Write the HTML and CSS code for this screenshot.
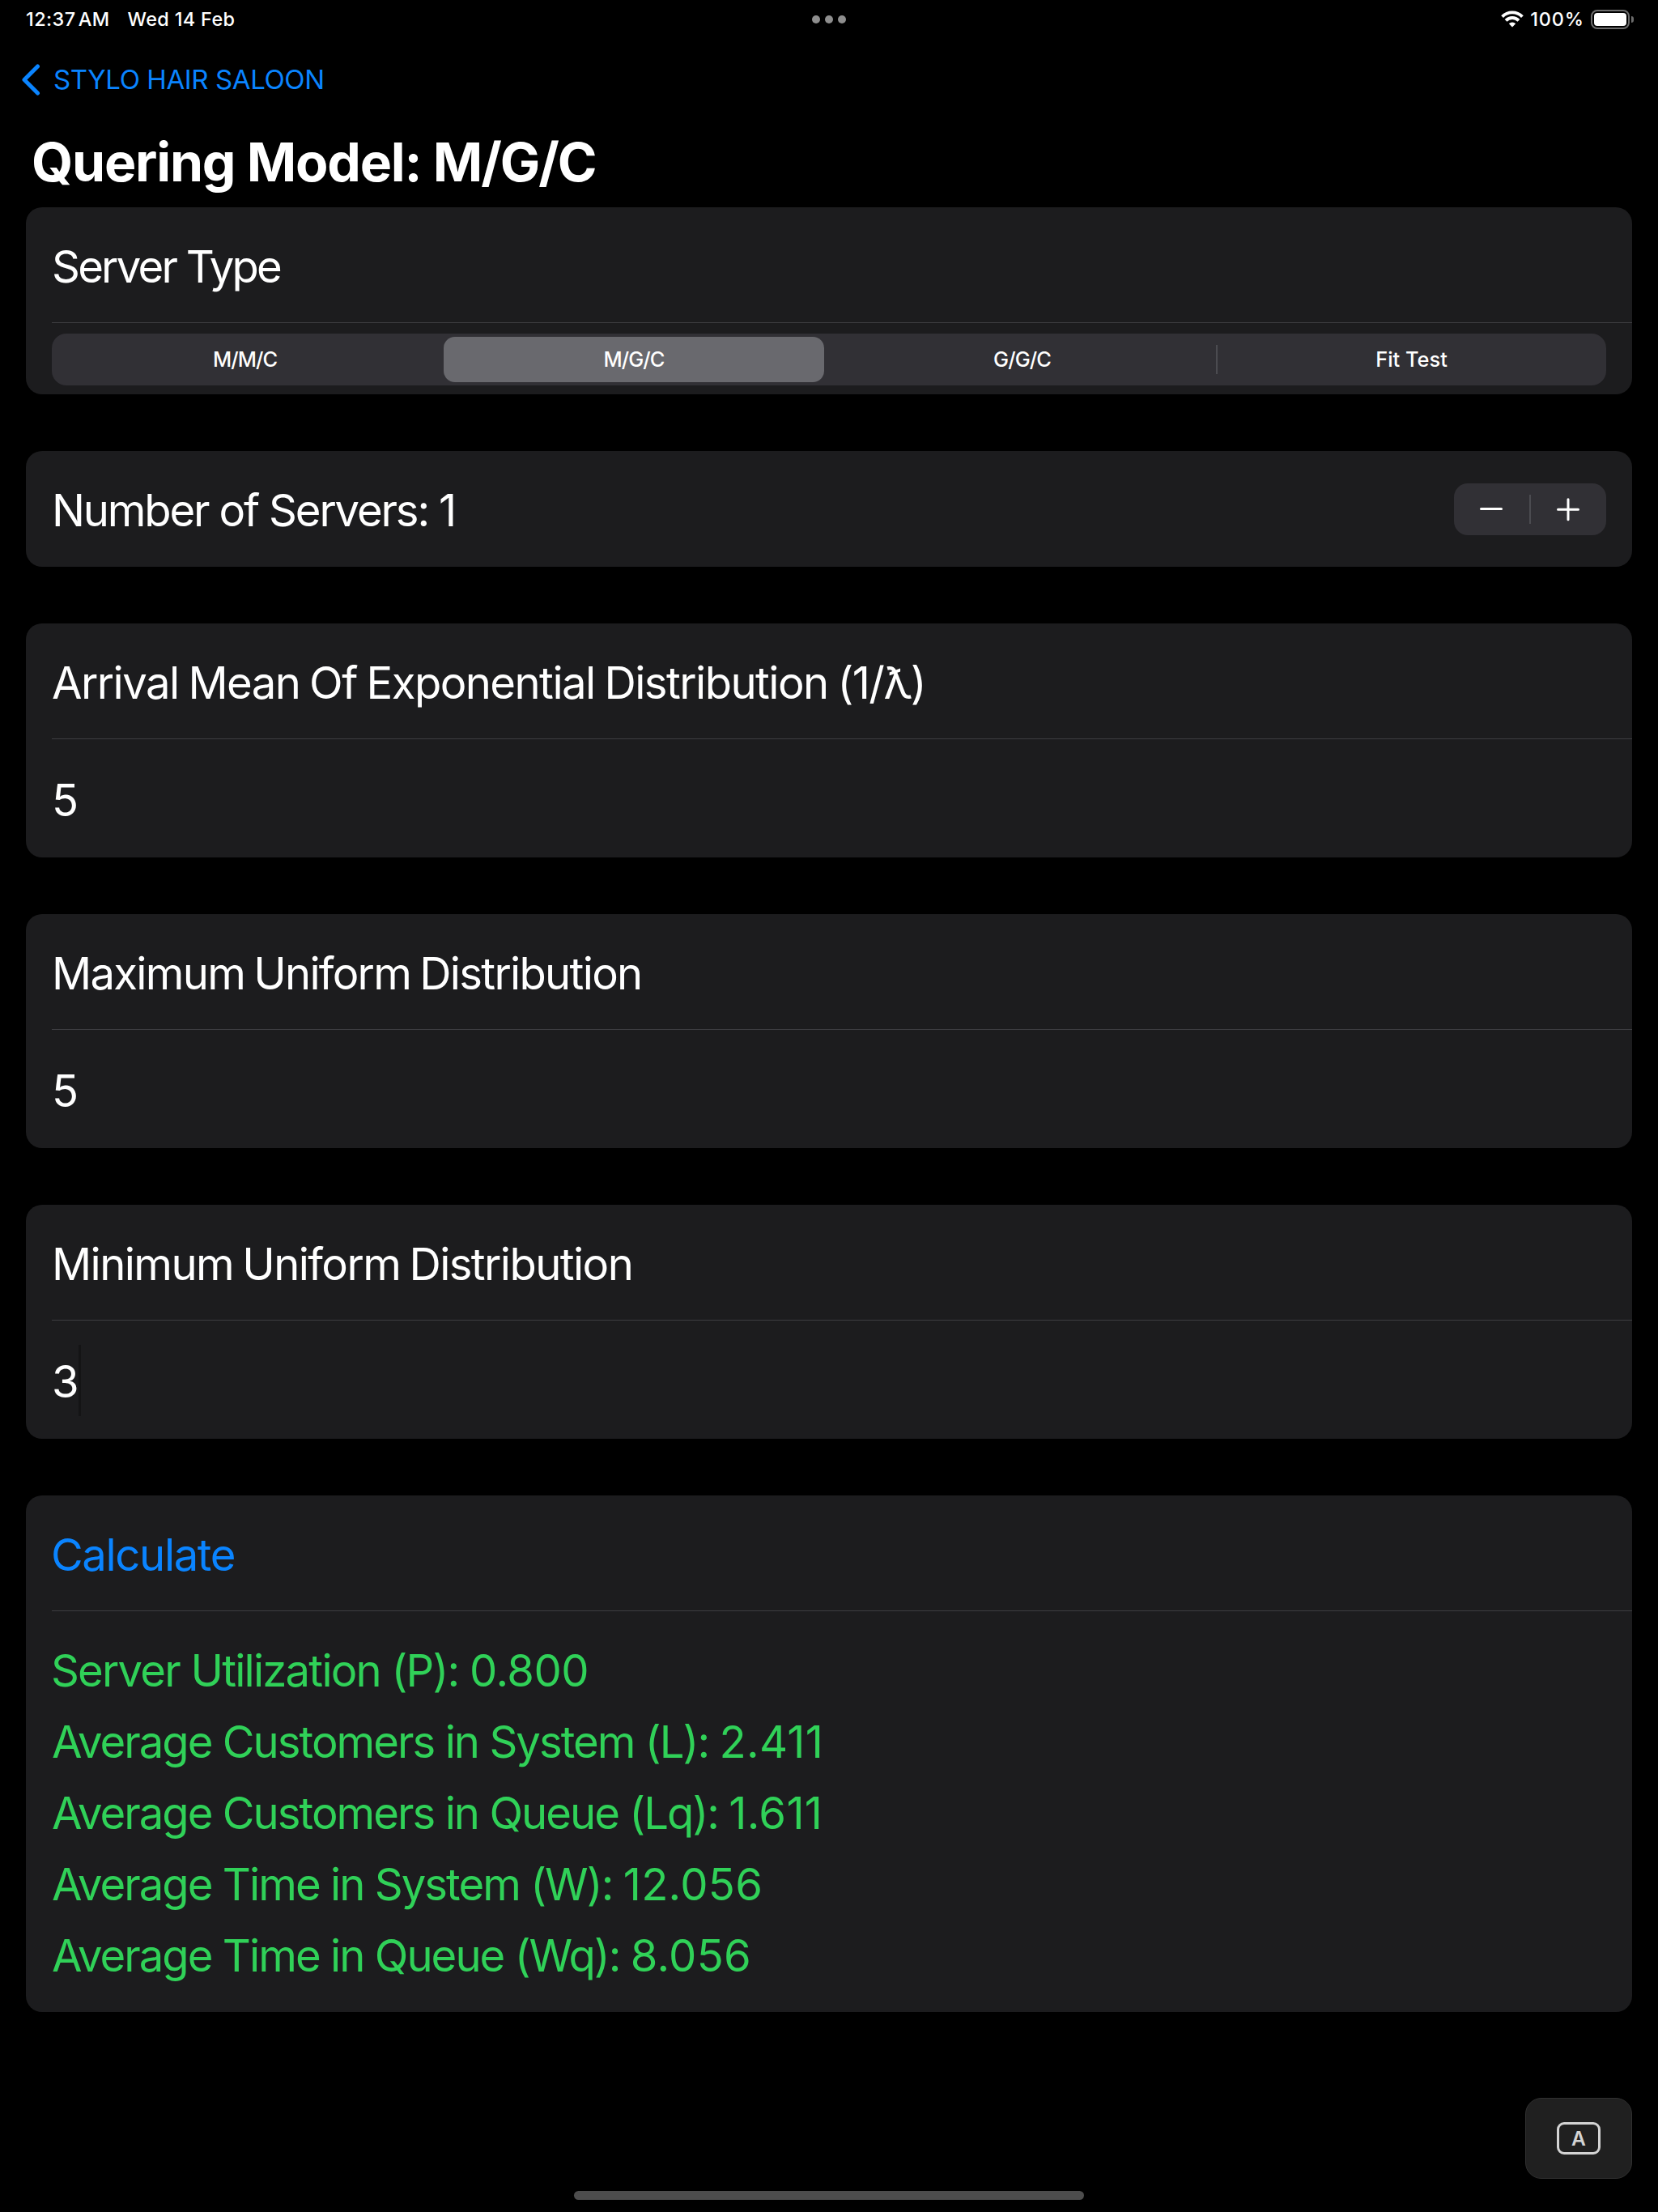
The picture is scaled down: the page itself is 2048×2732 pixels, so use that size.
FILE: index.html
```html
<!DOCTYPE html>
<html lang="en">
<head>
<meta charset="utf-8">
<title>Quering Model: M/G/C</title>
<link rel="stylesheet" href="styles.css">
</head>
<body>
<div class="screen">
  <header class="status">
    <div class="status-left"><span class="time">12:37 AM</span><span class="date">Wed 14 Feb</span></div>
    <div class="dots"><i></i><i></i><i></i></div>
    <div class="status-right">
      <svg class="wifi" width="28" height="22" viewBox="0 0 28 22" fill="none" stroke="#fff" stroke-width="3.9">
        <path d="M1.6 7.6a17.4 17.4 0 0 1 24.8 0"/>
        <path d="M6.1 12.3a11 11 0 0 1 15.8 0"/>
        <path d="M14 20.6l-4.2-4.3a6 6 0 0 1 8.4 0z" fill="#fff" stroke="none"/>
      </svg>
      <span class="percent">100%</span>
      <span class="battery"><i class="level"></i></span><i class="nub"></i>
    </div>
  </header>

  <nav class="nav">
    <svg width="24" height="40" viewBox="0 0 24 40" fill="none" stroke="#0a84ff" stroke-width="5" stroke-linecap="round" stroke-linejoin="round"><path d="M20.5 4L4 20.500L20.500 37"/></svg>
    <a class="back">STYLO HAIR SALOON</a>
  </nav>
  <h1 class="title">Quering Model: <span class="model">M/G/C</span></h1>

  <main class="form">
    <section class="card">
      <div class="row head"><span class="label type">Server Type</span></div>
      <div class="picker">
        <div class="segments">
          <span class="seg">M/M/C</span>
          <span class="seg selected">M/G/C</span>
          <span class="seg">G/G/C</span>
          <span class="seg divided fit">Fit Test</span>
        </div>
      </div>
    </section>

    <section class="card">
      <div class="row servers">
        <span class="label number">Number of Servers: 1</span>
        <div class="stepper">
          <svg width="93" height="64" viewBox="0 0 93 64" fill="none" stroke="#fff" stroke-width="3" stroke-linecap="round"><path d="M33.500 31.500H58.500"/></svg>
          <i class="bar"></i>
          <svg width="93" height="64" viewBox="0 0 93 64" fill="none" stroke="#fff" stroke-width="3" stroke-linecap="round"><path d="M33.500 32.200H58.500M46 19.700V44.700"/></svg>
        </div>
      </div>
    </section>

    <section class="card">
      <div class="row head"><span class="label arrival">Arrival Mean Of Exponential Distribution (1/ƛ)</span></div>
      <div class="row value"><span class="label">5</span></div>
    </section>

    <section class="card">
      <div class="row head"><span class="label maximum">Maximum Uniform Distribution</span></div>
      <div class="row value"><span class="label">5</span></div>
    </section>

    <section class="card">
      <div class="row head"><span class="label minimum">Minimum Uniform Distribution</span></div>
      <div class="row value"><span class="label">3</span><i class="caret"></i></div>
    </section>

    <section class="card">
      <div class="row head"><span class="label calculate">Calculate</span></div>
      <div class="results">
        <p class="utilization">Server Utilization (P): <span class="num">0.800</span></p>
        <p>Average Customers in System (L): <span class="num">2.411</span></p>
        <p>Average Customers in Queue (Lq): <span class="num">1.611</span></p>
        <p>Average Time in System (W): <span class="num">12.056</span></p>
        <p>Average Time in Queue (Wq): <span class="num">8.056</span></p>
      </div>
    </section>
  </main>

  <div class="keyboard"><span class="key">A</span></div>
  <div class="home"></div>
</div>
</body>
</html>
```
FILE: styles.css
```css
* { box-sizing: border-box; }
body { margin: 0; background: #000; color: #fff; font-family: Inter, "Liberation Sans", sans-serif; }
p, h1 { margin: 0; }
i { display: block; }
svg { display: block; flex: none; }

.screen { position: relative; width: 2048px; height: 2732px; overflow: hidden; white-space: nowrap; }

/* Status bar */
.status { display: grid; grid-template-columns: 1fr auto 1fr; align-items: center; height: 48px; padding: 0 30px 0 32px; font-size: 23.4px; line-height: 48px; font-weight: 500; }
.status-left { display: flex; gap: 22px; height: 48px; }
.time { letter-spacing: 0.45px; word-spacing: -3.5px; }
.date { letter-spacing: 0.37px; }
.dots { display: flex; gap: 6px; margin-left: -2px; }
.dots i { width: 10px; height: 10px; border-radius: 50%; background: #8e8e8e; }
.status-right { display: flex; justify-content: flex-end; align-items: center; }
.wifi { margin-right: 8px; }
.percent { letter-spacing: 0.93px; margin-right: 8px; height: 48px; }
.battery { width: 48px; height: 24px; padding: 2px; border: 2px solid #6c6c6c; border-radius: 8px; }
.level { height: 16px; border-radius: 4px; background: #fff; }
.nub { width: 3px; height: 8px; margin-left: 2px; border-radius: 0 4px 4px 0; background: #6c6c6c; }

/* Navigation */
.nav { display: flex; align-items: center; height: 101px; padding: 0 0 2px 26px; color: #0a84ff; }
.back { margin-left: 16px; font-size: 33px; letter-spacing: -0.4px; }
.title { height: 107px; padding-left: 39px; font-size: 66px; line-height: 102px; font-weight: 700; letter-spacing: -1.2px; }
.model { letter-spacing: -2.1px; }

/* Cards */
.form { display: flex; flex-direction: column; gap: 70px; padding: 0 32px; }
.card { background: #1c1c1e; border-radius: 20px; overflow: hidden; }
.row { display: flex; align-items: center; margin-left: 32px; }
.head { height: 143px; padding-top: 4px; border-bottom: 1px solid #3d3d41; }
.value { height: 146px; padding-top: 3px; }
.label, .results { font-size: 54.4px; letter-spacing: -1.6px; }
.type { letter-spacing: -2.75px; }
.number { letter-spacing: -2.15px; }
.arrival { letter-spacing: -1.53px; word-spacing: -2px; }
.maximum { letter-spacing: -1.7px; word-spacing: -2.5px; }
.minimum { letter-spacing: -1.57px; word-spacing: -2.5px; }
.calculate { color: #0a84ff; letter-spacing: -1.36px; margin-left: -1px; }
.caret { width: 3px; height: 88px; margin: -1px 0 0 1px; background: #141415; }

/* Segmented picker */
.picker { height: 88px; padding: 13px 32px 11px; }
.segments { display: grid; grid-template-columns: repeat(4, 1fr); height: 64px; border-radius: 18px; background: #313035; font-size: 25.4px; font-weight: 450; letter-spacing: -0.9px; line-height: 62px; }
.seg { display: flex; align-items: center; justify-content: center; padding: 0 3px 1px 0; }
.selected { margin: 4px 6px 4px 4px; padding: 0 0 1px; border-radius: 14px; background: #69696e; font-weight: 550; line-height: 54px; }
.fit { letter-spacing: 0; padding-right: 0; }
.divided::before { content: ""; width: 2px; height: 36px; margin-right: auto; margin-left: -2px; background: #4b4b50; }
.divided::after { content: ""; width: 1px; margin-left: auto; }

/* Stepper */
.servers { height: 143px; justify-content: space-between; margin-right: 32px; }
.servers .label { padding-top: 3px; }
.stepper { display: flex; align-items: center; width: 188px; height: 64px; margin-top: 1px; border-radius: 17px; background: #313035; }
.bar { width: 2px; height: 36px; background: #4b4b50; }

/* Results */
.results { margin-left: 32px; height: 495px; padding-top: 29px; line-height: 88px; letter-spacing: -1.95px; color: #30d158; }
.num { letter-spacing: 0.3px; }
.utilization { letter-spacing: -1.78px; margin-left: -1px; }
.utilization .num { letter-spacing: -0.5px; }

/* Floating controls */
.keyboard { position: absolute; left: 1884px; top: 2591px; display: flex; align-items: center; justify-content: center; width: 132px; height: 100px; border: 1px solid #303030; border-radius: 20px; background: #202020; }
.key { display: flex; align-items: center; justify-content: center; width: 54px; height: 40px; border: 3px solid #d4d4d4; border-radius: 9px; color: #d4d4d4; font-size: 24.5px; font-weight: 600; }
.home { position: absolute; left: 709px; top: 2706px; width: 630px; height: 11px; border-radius: 6px; background: #4d4d4d; }
```
